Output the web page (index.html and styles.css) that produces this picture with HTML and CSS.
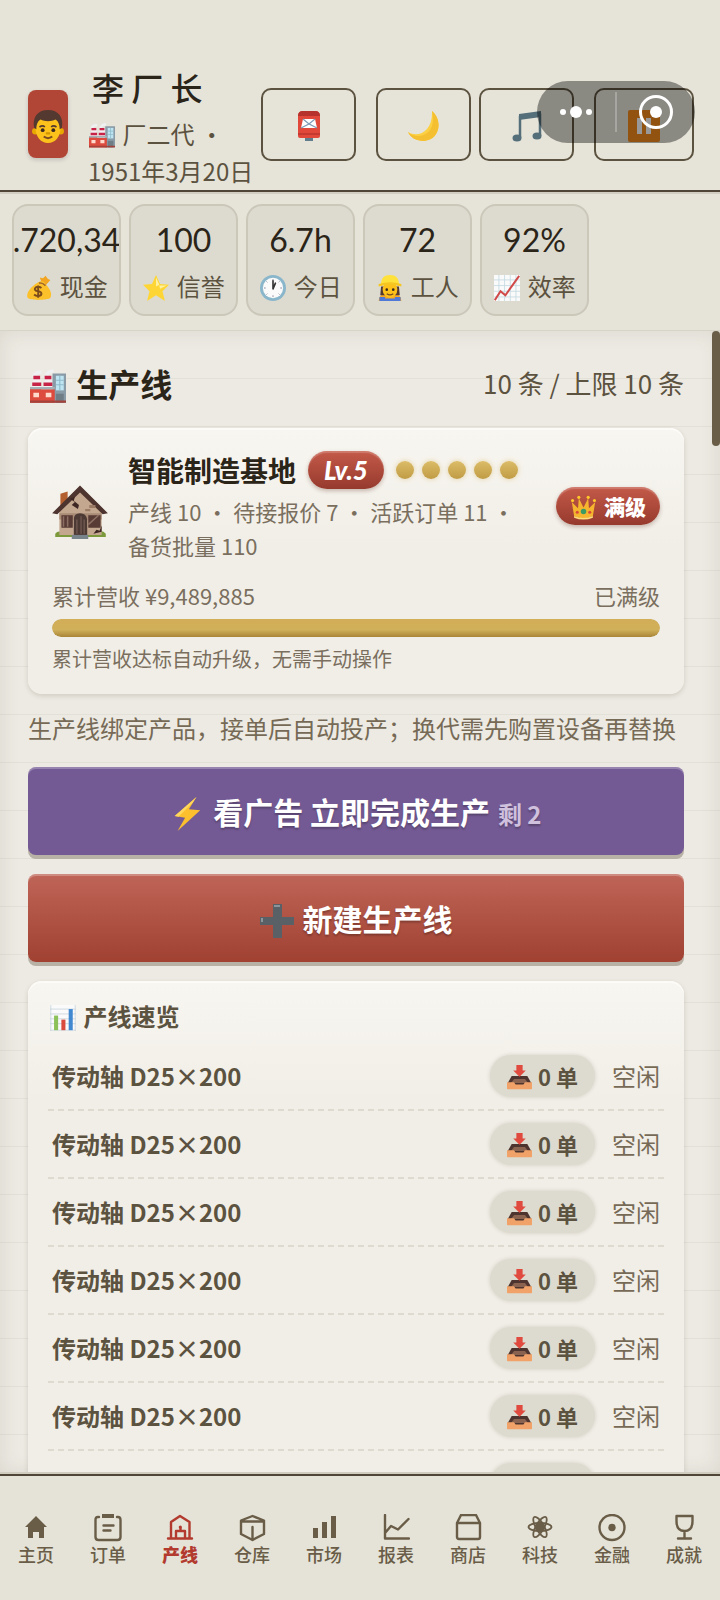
FILE: index.html
```html
<!DOCTYPE html>
<html lang="zh-CN">
<head>
    <meta charset="UTF-8">
    <meta name="viewport" content="width=device-width, initial-scale=1.0">
    <title>生产线</title>
    <link rel="stylesheet" href="styles.css">
</head>
<body>
    <!-- 图标库 -->
    <svg class="sprite" aria-hidden="true">
        <symbol id="e-man" viewBox="0 0 32 32">
            <circle cx="4" cy="20" r="3" fill="#e8a800"/><circle cx="28" cy="20" r="3" fill="#e8a800"/>
            <path d="M4 15C4 5 9 3 16 3s12 3 12 12c0 10-5 16-12 16S4 25 4 15z" fill="#fcc21b"/>
            <path d="M3 17C1 7 6 0 16 0s15 7 13 17l-2 1c0-5-2-8-4-9-4 2-10 2-14 0-2 1-4 4-4 9z" fill="#543930"/>
            <path d="M8 16q3-2 5 0M19 16q2-2 5 0" stroke="#543930" stroke-width="1.6" fill="none"/>
            <circle cx="11" cy="19" r="1.8" fill="#3b2820"/><circle cx="21" cy="19" r="1.8" fill="#3b2820"/>
            <path d="M14 22h4" stroke="#d19400" stroke-width="2"/><path d="M12 25q4 3 8 0" stroke="#7a4a20" stroke-width="1.8" fill="none"/>
        </symbol>
        <symbol id="e-factory" viewBox="0 0 32 32">
            <path d="M3 7q2-5 7-4M14 7q2-6 7-5" stroke="#eef0f1" stroke-width="3" fill="none"/>
            <path d="M3 6h6l1 12H2zM13 6h6l1 12h-8z" fill="#f4eef0"/>
            <path d="M3 6h6v3H3zM13 6h6v3h-6zM2 12h8v3H2zM12 12h8v3h-8z" fill="#c62347"/>
            <path d="M20 4h12v26H20z" fill="#899ba6"/><path d="M23 6h7v13h-7z" fill="#bfe5f2"/>
            <path d="M23 10h7M23 14h7M26.500 6v13" stroke="#8fbccc" stroke-width="1"/><path d="M23 22h7v8h-7z" fill="#6f7d87"/>
            <path d="M0 17l10-1v2h12v12H0z" fill="#dd4b3e"/><path d="M0 16h22v2H0z" fill="#a5b0b6"/>
            <path d="M3 21h5v4H3zM14 21h5v4h-5z" fill="#ffd9cc"/><path d="M0 28h32v2H0z" fill="#a3423a"/>
        </symbol>
        <symbol id="e-post" viewBox="0 0 32 32">
            <path d="M12 27h8v4h-8z" fill="#5f7d8c"/><path d="M5 6q0-5 5-5h12q5 0 5 5v20q0 2-2 2H7q-2 0-2-2z" fill="#e2483a"/>
            <path d="M5 6q0-5 5-5h12q5 0 5 5z" fill="#b5332c"/><path d="M10 9h12l2 9H8z" fill="#fff"/>
            <path d="M10 9l6 5 6-5M8 18l8-4 8 4" stroke="#7e9ab5" stroke-width="1.200" fill="none"/><path d="M5 23h22v2H5z" fill="#c53a30"/>
        </symbol>
        <symbol id="e-moon" viewBox="0 0 32 32">
            <path d="M24 1c11 9 8 29-8 30C8 31 2 27 0 22c10 6 25 0 24-21z" fill="#fcd043"/>
            <path d="M24 1c11 9 8 29-8 30C8 31 2 27 0 22c8 8 30 5 24-21z" fill="#f4bf31"/>
        </symbol>
        <symbol id="e-music" viewBox="0 0 32 32">
            <path d="M9 28V7l20-2v21" stroke="#546e7a" stroke-width="2.500" fill="none"/><path d="M8 4l22-3v6L8 10z" fill="#546e7a"/>
            <ellipse cx="6" cy="28" rx="4.500" ry="3.500" fill="#546e7a"/><ellipse cx="26" cy="26" rx="4.500" ry="3.500" fill="#546e7a"/>
        </symbol>
        <symbol id="e-pause" viewBox="0 0 32 32">
            <rect width="32" height="32" rx="2" fill="#f38b1d"/><path d="M9 8h5v16H9zM18 8h5v16h-5z" fill="#fff"/>
        </symbol>
        <symbol id="e-money" viewBox="0 0 32 32">
            <path d="M19 9l-2-6 4 1 3-3 3 4 3 1-6 7z" fill="#f2a520"/>
            <path d="M17 8c3-1 6 0 7 3 7 7 8 13 6 17-2 3-25 4-28 0C-1 22 8 12 17 8z" fill="#fcc02a"/>
            <path d="M16 10q4-1 8 3" stroke="#a4692a" stroke-width="2" fill="none"/>
            <path d="M19 16c-3-3-9-1-8 2 1 3 8 1 8 5 0 3-6 4-9 1M15 13v15" stroke="#7d4c1b" stroke-width="2.400" fill="none"/>
        </symbol>
        <symbol id="e-star" viewBox="0 0 32 32">
            <path d="M16 0l5 11 11 1-8 8 3 12-11-7-11 7 3-12-8-8 11-1z" fill="#fdd636"/><path d="M16 3l4 9-4 2zM29 13l-8 4-1-4z" fill="#fff1a0"/>
        </symbol>
        <symbol id="e-clock" viewBox="0 0 32 32">
            <circle cx="16" cy="16" r="16" fill="#8ab6cb"/><circle cx="16" cy="16" r="12.500" fill="#fafafa"/>
            <path d="M16 5v2M16 25v2M5 16h2M25 16h2M8 8l1 1M24 8l-1 1M8 24l1-1M24 24l-1-1" stroke="#889" stroke-width="1.200"/>
            <path d="M16 17V7M16 17l3-7" stroke="#333" stroke-width="2" stroke-linecap="round"/>
        </symbol>
        <symbol id="e-worker" viewBox="0 0 32 32">
            <path d="M2 32q0-8 8-9h12q8 1 8 9z" fill="#f9a825"/><path d="M3 27h7v5H3zM22 27h7v5h-7zM10 29h12v3H10z" fill="#4e79d8"/>
            <path d="M5 14h22l1 11H4z" fill="#543930"/><ellipse cx="16" cy="18" rx="9" ry="10" fill="#fcc21b"/>
            <path d="M5 11C5 4 9 0 16 0s11 4 11 11z" fill="#ffe13b"/><path d="M2 11q14-4 28 0v3q-14-4-28 0z" fill="#f5c622"/>
            <circle cx="12" cy="18" r="1.600" fill="#3b2820"/><circle cx="20" cy="18" r="1.600" fill="#3b2820"/><path d="M12 23q4 3 8 0" stroke="#7a4a20" stroke-width="1.500" fill="none"/>
        </symbol>
        <symbol id="e-chart" viewBox="0 0 32 32">
            <path d="M0 0h32v32H0z" fill="#fafafa"/><path d="M6 0v32M13 0v32M20 0v32M27 0v32M0 6h32M0 13h32M0 20h32M0 27h32" stroke="#c3d9e2" stroke-width="1"/>
            <path d="M1 31l7-11 6 5L31 1" stroke="#d14b4b" stroke-width="2.500" fill="none"/>
        </symbol>
        <symbol id="e-house" viewBox="0 -12 54 64">
            <path d="M3 47q3-4 7-1l34-1q5-2 8 2v3H3z" fill="#7c9a3b"/><path d="M8 8l7-2v14l-7 5z" fill="#b45f2f"/>
            <path d="M7 25L27 4l21 21v23H7z" fill="#c3a78f"/><path d="M7 27h41v6H7z" fill="#a98b76"/>
            <path d="M27 0L0 27l5 1L27 7l22 21 5-1z" fill="#4e342e"/>
            <path d="M17 13l5 3-3 3 6 4 1-4-5-4 1-4zM40 47l3-4 3 1 2-5v6z" fill="#3e2723"/>
            <path d="M9 29h11v12H9zM35 29h12v12H35z" fill="#573b34"/><path d="M11 30v10M15 30v10M35 38l10-9" stroke="#8d6e63" stroke-width="1.500"/>
            <path d="M21 48V33q0-6 6-6t7 6v15z" fill="#4e3a35"/><path d="M24 33v14M28 30v17M31 33v14" stroke="#7b625a" stroke-width="1"/>
            <path d="M36 19h6v3h-6zM32 23h5v2h-5z" fill="#9b7b66"/><path d="M19 48h16v4H19z" fill="#78838a"/>
        </symbol>
        <symbol id="e-crown" viewBox="0 0 32 32">
            <path d="M4 27L1 9l8 8 1-13 6 12 6-12 1 13 8-8-3 18q-12 6-24 0z" fill="#f5b52e"/>
            <circle cx="2" cy="7" r="2" fill="#ffca28"/><circle cx="10" cy="3" r="2" fill="#ffca28"/><circle cx="22" cy="3" r="2" fill="#ffca28"/><circle cx="30" cy="7" r="2" fill="#ffca28"/>
            <circle cx="16" cy="21" r="3.500" fill="#3b9b63"/><circle cx="8" cy="22" r="2" fill="#d84a3a"/><circle cx="24" cy="22" r="2" fill="#d84a3a"/>
            <path d="M4 27q12 5 24 0v2q-12 5-24 0z" fill="#ffdc7a"/>
        </symbol>
        <symbol id="e-bolt" viewBox="0 0 28 36"><path d="M24 0L1 20l11 2L4 36 28 14l-12-1z" fill="#fcbf2d"/><path d="M24 0L1 20l4 1L20 6z" fill="#ffd75e"/></symbol>
        <symbol id="e-plus" viewBox="0 0 34 34"><path d="M13 0h9v13h12v8H22v13h-9V21H0v-8h13z" fill="#596066"/><path d="M14 2h6M2 14v4" stroke="#8d959b" stroke-width="2"/></symbol>
        <symbol id="e-bars" viewBox="0 0 32 32">
            <path d="M0 0h32v32H0z" fill="#fafafa"/><path d="M0 5h32M0 11h32M0 17h32M0 23h32M0 31h32M1 0v32M31 0v32" stroke="#c6d4da" stroke-width="1"/>
            <path d="M5 13h5v18H5z" fill="#8bc158"/><path d="M14 18h5v13h-5z" fill="#d94b3c"/><path d="M23 5h5v26h-5z" fill="#4088d0"/>
        </symbol>
        <symbol id="e-inbox" viewBox="0 0 32 32">
            <path d="M6 14h20l5 9v6H1v-6z" fill="#4e342e"/><path d="M9 18h14l4 5H5z" fill="#8a6350"/>
            <path d="M0 22h9l2 3h10l2-3h9v8q0 1-1 1H1q-1 0-1-1z" fill="#f0a268"/><path d="M12 0h8v7h4l-8 8-8-8h4z" fill="#e04a3f"/>
        </symbol>
    </svg>

    <header class="topbar">
        <div class="avatar"><svg class="emoji"><use href="#e-man"/></svg></div>
        <div class="player">
            <h1>李 厂 长</h1>
            <p><svg class="emoji"><use href="#e-factory"/></svg> 厂二代 ・<br>1951年3月20日</p>
        </div>
        <div class="tools">
            <button class="tool" aria-label="邮箱"><svg class="emoji"><use href="#e-post"/></svg></button>
            <div class="tool-pair">
                <button class="tool" aria-label="夜间"><svg class="emoji"><use href="#e-moon"/></svg></button>
                <button class="tool" aria-label="音乐"><svg class="emoji"><use href="#e-music"/></svg></button>
            </div>
            <button class="tool" aria-label="暂停"><svg class="emoji"><use href="#e-pause"/></svg></button>
        </div>
        <div class="capsule">
            <button aria-label="更多"><svg width="36" height="36" viewBox="0 0 36 36" fill="#fff"><circle cx="5" cy="18" r="3"/><circle cx="18" cy="18" r="6"/><circle cx="31" cy="18" r="3"/></svg></button>
            <button aria-label="关闭"><svg width="36" height="36" viewBox="0 0 36 36"><circle cx="18" cy="18" r="15.500" fill="none" stroke="#fff" stroke-width="3"/><circle cx="18" cy="18" r="6" fill="#fff"/></svg></button>
        </div>
    </header>

    <section class="stats">
        <div class="stat"><b>.720,34</b><span><svg class="emoji"><use href="#e-money"/></svg> 现金</span></div>
        <div class="stat"><b>100</b><span><svg class="emoji"><use href="#e-star"/></svg> 信誉</span></div>
        <div class="stat"><b>6.7h</b><span><svg class="emoji"><use href="#e-clock"/></svg> 今日</span></div>
        <div class="stat"><b>72</b><span><svg class="emoji"><use href="#e-worker"/></svg> 工人</span></div>
        <div class="stat"><b>92%</b><span><svg class="emoji"><use href="#e-chart"/></svg> 效率</span></div>
    </section>

    <div class="stage">
        <main class="content">
            <div class="section-head">
                <h2><svg class="emoji"><use href="#e-factory"/></svg> 生产线</h2>
                <span>10 条 / 上限 10 条</span>
            </div>

            <div class="card base">
                <div class="base-top">
                    <svg class="base-icon"><use href="#e-house"/></svg>
                    <div class="base-info">
                        <div class="base-title">
                            <h3>智能制造基地</h3>
                            <span class="badge level">Lv.5</span>
                            <span class="dots"><i></i><i></i><i></i><i></i><i></i></span>
                        </div>
                        <p>产线 10 ・ 待接报价 7 ・ 活跃订单 11 ・<br>备货批量 110</p>
                    </div>
                    <span class="badge"><svg class="emoji"><use href="#e-crown"/></svg> 满级</span>
                </div>
                <div class="progress-label"><span>累计营收 ¥9,489,885</span><span>已满级</span></div>
                <div class="progress"><div class="progress-fill" style="width: 100%"></div></div>
                <p class="note">累计营收达标自动升级，无需手动操作</p>
            </div>

            <p class="hint">生产线绑定产品，接单后自动投产；换代需先购置设备再替换</p>

            <button class="btn btn-ad"><svg class="emoji"><use href="#e-bolt"/></svg> 看广告 立即完成生产 <small>剩 2</small></button>
            <button class="btn btn-new"><svg class="emoji"><use href="#e-plus"/></svg> 新建生产线</button>

            <div class="card overview">
                <h4><svg class="emoji"><use href="#e-bars"/></svg> 产线速览</h4>
                <ul id="lineList"></ul>
            </div>
        </main>
        <div class="thumb"></div>
    </div>

    <nav class="tabs">
        <a href="#"><svg viewBox="0 0 28 28"><path class="solid" d="M14 2l11 11h-3v11h-5v-6h-6v6H6V13H3z"/></svg>主页</a>
        <a href="#"><svg viewBox="0 0 28 28"><path d="M5 3H4Q1.500 3 1.500 6v17q0 3 3 3h19q3 0 3-3V6q0-3-2.500-3h-1M9.500 11.500h10M9.500 16.500h7"/><path class="solid" d="M8 0h12v4H8z"/></svg>订单</a>
        <a href="#" class="active"><svg viewBox="0 0 28 28"><path d="M5 24V8l9-6 9.500 6v16M2 24.500h24M10 24v-7h9v7M14.500 17v-3"/><circle class="solid" cx="14.300" cy="13" r="1.600"/></svg>产线</a>
        <a href="#"><svg viewBox="0 0 28 28"><path d="M14.500 2L26 6.500V20l-11.500 6L3 20V6.500zM3 7.500h23M14.500 13v13"/></svg>仓库</a>
        <a href="#"><svg viewBox="0 0 28 28"><path class="solid" d="M3 14h5v10H3zM12 8h5v16h-5zM21 2h5v22h-5z"/></svg>市场</a>
        <a href="#"><svg viewBox="0 0 28 28"><path d="M3 1v23.500h24M3 19l6-7 7 3.500L26.500 5"/></svg>报表</a>
        <a href="#"><svg viewBox="0 0 28 28"><path d="M3 9l4-8h15l4 8M3 9h23v14q0 2-2 2H5q-2 0-2-2z"/></svg>商店</a>
        <a href="#"><svg viewBox="0 0 28 28"><g class="thin"><ellipse cx="14" cy="13" rx="11.500" ry="4"/><ellipse cx="14" cy="13" rx="11.500" ry="4" transform="rotate(60 14 13)"/><ellipse cx="14" cy="13" rx="11.500" ry="4" transform="rotate(120 14 13)"/></g><circle class="solid" cx="14" cy="13" r="5"/></svg>科技</a>
        <a href="#"><svg viewBox="0 0 28 28"><circle cx="14" cy="13.500" r="12.500"/><circle class="solid" cx="14" cy="13.500" r="3.700"/></svg>金融</a>
        <a href="#"><svg viewBox="0 0 28 28"><path d="M6.500 2h16v5q0 10-8 10t-8-10zM14.500 17v7.500M8 24.500h13"/></svg>成就</a>
    </nav>

    <script>
        // 产线数据
        const lines = Array.from({ length: 7 }, () => ({ name: '传动轴 D25×200', orders: 0, state: '空闲' }));

        document.getElementById('lineList').innerHTML = lines.map(l => `
            <li>
                <strong>${l.name}</strong>
                <span class="pill"><svg class="emoji"><use href="#e-inbox"/></svg> ${l.orders} 单</span>
                <span>${l.state}</span>
            </li>`).join('');
    </script>
</body>
</html>
```
FILE: styles.css
```css
* { box-sizing: border-box; }
body { margin: 0; height: 100vh; display: flex; flex-direction: column; font-family: "Noto Sans CJK SC", sans-serif; font-size: 24px; line-height: 36px; color: #5c5240; background: #e6e4d9; }
h1, h2, h3, h4, p, ul { margin: 0; padding: 0; }
button { font-family: inherit; padding: 0; cursor: pointer; }
.sprite { position: absolute; width: 0; height: 0; }
.emoji { width: 26px; height: 26px; margin: 0 2px 0 1px; vertical-align: -5px; }

/* 顶栏 */
.topbar { position: relative; display: flex; align-items: center; padding: 59px 26px 1px 28px; border-bottom: 2px solid #4f4638; box-shadow: 0 2px 0 #d3cec2; z-index: 1; }
.avatar { width: 40px; height: 68px; padding-top: 6px; flex: none; display: flex; align-items: center; justify-content: center; background: #b24636; border-radius: 8px; box-shadow: 0 2px 4px rgba(0,0,0,0.15); }
.avatar .emoji { width: 34px; height: 34px; margin: 0; }
.player { margin-left: 20px; white-space: nowrap; }
.player h1 { padding-left: 4px; font-size: 32px; line-height: 56px; font-weight: 500; color: #2b2418; }
.player p { line-height: 37px; }
.tools { margin-left: auto; display: flex; gap: 20px; }
.tool-pair { display: flex; gap: 8px; }
.tool { width: 95px; height: 73px; padding-top: 4px; background: none; border: 2px solid #5c5240; border-radius: 10px; }
.tool .emoji { width: 32px; height: 32px; margin: 0; vertical-align: middle; }
.tools > .tool:last-child { width: 100px; }
.capsule { position: absolute; right: 25px; top: 81px; width: 158px; height: 62px; display: flex; align-items: center; background: rgba(0,0,0,0.4); border-radius: 31px; }
.capsule button { flex: 1; height: 40px; background: none; border: none; }
.capsule button + button { border-left: 2px solid rgba(255,255,255,0.25); }
.capsule svg { display: block; margin: 0 auto; }

/* 资源栏 */
.stats { display: flex; gap: 8px; padding: 12px 12px 14px; border-bottom: 1px solid #d6d3c8; }
.stat { width: 109px; height: 112px; padding-top: 12px; display: flex; flex-direction: column; align-items: center; overflow: hidden; white-space: nowrap; background: #dddbcf; border: 2px solid #cbc8ba; border-radius: 16px; }
.stat b { font-family: Lato, sans-serif; font-size: 32px; line-height: 44px; font-weight: 400; color: #2b2418; }
.stat span { line-height: 48px; }

/* 主体 */
.stage { position: relative; flex: 1; min-height: 0; background: repeating-linear-gradient(#edeae3 0 47px, #e3e0d8 47px 48px); box-shadow: inset 0 0 20px rgba(80,70,50,0.12); }
.content { height: 100%; padding: 28px 36px 20px 28px; overflow-y: auto; scrollbar-width: none; }
.thumb { position: absolute; right: 0; top: 0; width: 8px; height: 115px; background: #6a5d48; border-radius: 4px; }
.section-head { display: flex; justify-content: space-between; align-items: center; line-height: 48px; margin-bottom: 21px; font-size: 26px; }
.section-head h2 { font-size: 32px; color: #2b2418; }
.section-head .emoji { width: 36px; height: 36px; margin: 0 3px 0 2px; vertical-align: -8px; }
.card { background: linear-gradient(#f8f6f1, #f1eee7 120px); border-radius: 14px; box-shadow: 0 2px 5px rgba(60,50,30,0.16), inset 0 2px 0 #fcfbf8; }
.base { padding: 22px 24px 18px; color: #7a6f5e; font-size: 22px; line-height: 34px; }
.base-top { display: flex; align-items: center; }
.base-icon { width: 56px; height: 66px; flex: none; margin-right: 20px; }
.base-info { flex: 1; white-space: nowrap; }
.base-title { display: flex; align-items: center; gap: 12px; height: 40px; margin-bottom: 4px; }
.base-title h3 { font-size: 28px; color: #2b2418; }
.badge { height: 38px; padding: 0 14px; display: flex; align-items: center; gap: 6px; font-size: 21px; font-weight: 900; color: #fff; background: linear-gradient(#c45a49, #963a2e); border-radius: 19px; box-shadow: 0 2px 4px rgba(90,40,20,0.3), inset 0 2px 1px rgba(255,255,255,0.2); }
.badge .emoji { width: 25px; height: 25px; margin: 2px 2px 0 1px; }
.level { padding: 0 16px; font-family: Lato, sans-serif; font-style: italic; font-size: 26px; }
.dots { display: flex; gap: 8px; }
.dots i { width: 18px; height: 18px; border-radius: 50%; background: linear-gradient(#dcbc68, #c09c44); box-shadow: 0 0 5px rgba(212,175,80,0.5); }
.progress-label { display: flex; justify-content: space-between; margin: 16px 0 7px; }
.progress { height: 18px; border-radius: 9px; overflow: hidden; background: #dddbcf; }
.progress-fill { height: 100%; border-radius: 9px; background: linear-gradient(#d3ad58, #d0b05a 60%, #a98538); }
.note { font-size: 20px; margin-top: 5px; }
.hint { margin: 16px 0 21px; color: #766a56; }
.btn { display: block; width: 100%; height: 88px; margin-bottom: 19px; border: none; border-radius: 8px; color: #fff; font-size: 30px; font-weight: 700; text-shadow: 0 2px 2px rgba(0,0,0,0.25); box-shadow: 0 4px 0 #b7b1a6, inset 0 2px 0 rgba(255,255,255,0.25); }
.btn .emoji { width: 34px; height: 34px; margin: 0 2px 0 0; vertical-align: -7px; }
.btn small { margin-left: 1px; font-size: 24px; color: #cfc0de; }
.btn-ad { background: #745a94; }
.btn-new { background: linear-gradient(#bf6557, #a04132); }
.overview { padding: 17px 20px; }
.overview h4 { padding-left: 1px; font-size: 24px; margin-bottom: 9px; }
.overview ul { list-style: none; }
.overview li { display: flex; align-items: center; gap: 17px; height: 68px; padding: 0 4px; border-bottom: 2px dashed #dedad0; color: #766a56; }
.overview strong { flex: 1; color: #5c5240; }
.pill { height: 42px; padding: 0 17px; display: flex; align-items: center; gap: 5px; font-size: 22px; font-weight: 700; color: #5c5240; background: #dddbcf; border-radius: 21px; box-shadow: 0 0 4px rgba(90,80,60,0.2); }
.pill .emoji { width: 25px; height: 25px; margin: 3px 1px 0 0; }

/* 底部导航 */
.tabs { position: relative; display: flex; padding: 38px 0 34px; background: #e5e3d7; border-top: 2px solid #4f4638; box-shadow: 0 -2px 0 #d0ccbf; }
.tabs a { flex: 1; display: flex; flex-direction: column; align-items: center; font-size: 18px; line-height: 24px; font-weight: 500; color: #6a5d48; text-decoration: none; }
.tabs svg { width: 28px; height: 28px; fill: none; stroke: currentColor; stroke-width: 2.4; stroke-linejoin: round; stroke-linecap: round; }
.tabs .solid { fill: currentColor; stroke: none; }
.tabs .thin { stroke-width: 1.8; }
.tabs .active { color: #b23a2e; font-weight: 900; }
```
